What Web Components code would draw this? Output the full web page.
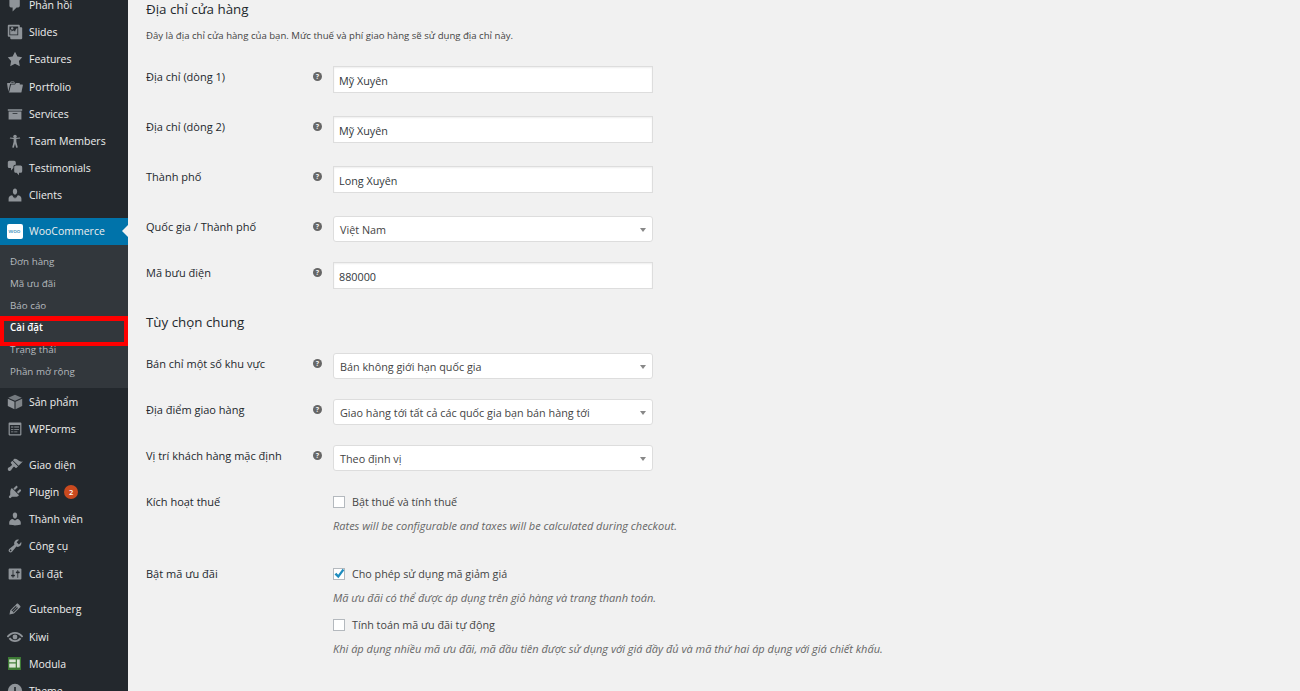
<!DOCTYPE html>
<html lang="vi">
<head>
<meta charset="utf-8">
<title>Cài đặt WooCommerce</title>
<style>
    html, body {
        margin: 0;
        height: 691px;
        overflow: hidden;
        background: #f1f1f1;
        font-family: "Open Sans", "Noto Sans", sans-serif;
    }
    body {
        display: flex;
    }
</style>
</head>
<body>
<admin-menu>
    <menu-item icon="comments">Phản hồi</menu-item>
    <menu-item icon="gallery">Slides</menu-item>
    <menu-item icon="star">Features</menu-item>
    <menu-item icon="folder">Portfolio</menu-item>
    <menu-item icon="archive">Services</menu-item>
    <menu-item icon="person">Team Members</menu-item>
    <menu-item icon="chat">Testimonials</menu-item>
    <menu-item icon="businessman">Clients</menu-item>
    <menu-item icon="woo" current gap>WooCommerce</menu-item>
    <sub-menu>
        <sub-item>Đơn hàng</sub-item>
        <sub-item>Mã ưu đãi</sub-item>
        <sub-item>Báo cáo</sub-item>
        <sub-item current>Cài đặt</sub-item>
        <sub-item>Trạng thái</sub-item>
        <sub-item>Phần mở rộng</sub-item>
    </sub-menu>
    <menu-item icon="box">Sản phẩm</menu-item>
    <menu-item icon="forms">WPForms</menu-item>
    <menu-item icon="brush" gap>Giao diện</menu-item>
    <menu-item icon="plugin" badge="2">Plugin</menu-item>
    <menu-item icon="users">Thành viên</menu-item>
    <menu-item icon="tools">Công cụ</menu-item>
    <menu-item icon="sliders">Cài đặt</menu-item>
    <menu-item icon="pencil" gap>Gutenberg</menu-item>
    <menu-item icon="eye">Kiwi</menu-item>
    <menu-item icon="modula">Modula</menu-item>
    <menu-item icon="clock">Theme</menu-item>
</admin-menu>

<settings-page>
    <section-title>Địa chỉ cửa hàng</section-title>
    <section-desc>Đây là địa chỉ cửa hàng của bạn. Mức thuế và phí giao hàng sẽ sử dụng địa chỉ này.</section-desc>

    <form-row label="Địa chỉ (dòng 1)" help><text-box>Mỹ Xuyên</text-box></form-row>
    <form-row label="Địa chỉ (dòng 2)" help><text-box>Mỹ Xuyên</text-box></form-row>
    <form-row label="Thành phố" help><text-box>Long Xuyên</text-box></form-row>
    <form-row label="Quốc gia / Thành phố" help compact><select-box>Việt Nam</select-box></form-row>
    <form-row label="Mã bưu điện" help><text-box>880000</text-box></form-row>

    <section-title style="margin-top:1px;margin-bottom:22px">Tùy chọn chung</section-title>

    <form-row label="Bán chỉ một số khu vực" help compact><select-box>Bán không giới hạn quốc gia</select-box></form-row>
    <form-row label="Địa điểm giao hàng" help compact><select-box>Giao hàng tới tất cả các quốc gia bạn bán hàng tới</select-box></form-row>
    <form-row label="Vị trí khách hàng mặc định" help compact><select-box>Theo định vị</select-box></form-row>

    <form-row label="Kích hoạt thuế" plain>
        <check-box>Bật thuế và tính thuế</check-box>
        <field-note>Rates will be configurable and taxes will be calculated during checkout.</field-note>
    </form-row>
    <form-row label="Bật mã ưu đãi" plain style="margin-top:27px">
        <check-box checked>Cho phép sử dụng mã giảm giá</check-box>
        <field-note>Mã ưu đãi có thể được áp dụng trên giỏ hàng và trang thanh toán.</field-note>
        <check-box style="margin-top:6px">Tính toán mã ưu đãi tự động</check-box>
        <field-note>Khi áp dụng nhiều mã ưu đãi, mã đầu tiên được sử dụng với giá đầy đủ và mã thứ hai áp dụng với giá chiết khấu.</field-note>
    </form-row>
    <section-title style="margin-top:29px">Tùy chọn tiền tệ</section-title>
</settings-page>

<script>
const ICONS = {
    comments: '<path d="M5 2h9c1.1 0 2 .9 2 2v7c0 1.1-.9 2-2 2h-2l-5 5v-5H5c-1.1 0-2-.9-2-2V4c0-1.1.9-2 2-2z"/>',
    gallery: '<path d="M16 4h1.96c.57 0 1.04.47 1.04 1.04v12.92c0 .57-.47 1.04-1.04 1.04H5.04C4.47 19 4 18.53 4 17.96V16H2.04C1.47 16 1 15.53 1 14.96V2.04C1 1.47 1.47 1 2.04 1h12.92c.57 0 1.04.47 1.04 1.04V4zM3 14h11V3H3v11zm5-8.5C8 4.67 7.33 4 6.5 4S5 4.67 5 5.5 5.67 7 6.5 7 8 6.33 8 5.5zm2 4.5s1-5 3-5v8H4V7c2 0 2 3 2 3s.33-2 2-2 2 2 2 2z"/>',
    star: '<path d="M10 1l3 6 6 .75-4.12 4.62L16 19l-6-3-6 3 1.13-6.63L1 7.75 7 7z"/>',
    folder: '<path d="M4 5H.78c-.37 0-.74.32-.69.84l1.56 9.99S3.5 8.47 3.86 6.7c.11-.53.61-.7.98-.7H10s-.7-2.08-.77-2.31C9.11 3.25 8.89 3 8.45 3H5.14c-.36 0-.7.23-.8.64C4.25 4.04 4 5 4 5zm4.88 0h-4s.42-1 .87-1h2.13c.48 0 1 1 1 1zM2.67 16.25c-.31.47-.76.75-1.26.75h15.73c.54 0 .92-.31 1.03-.83.44-2.19 1.68-8.44 1.68-8.44.07-.5-.3-.73-.62-.73H16V5.53c0-.16-.26-.53-.66-.53h-3.76c-.52 0-.87.58-.87.58L10 7H5.59c-.32 0-.63.19-.69.5 0 0-1.59 6.7-1.72 7.33-.07.37-.22.99-.51 1.42z"/>',
    archive: '<path d="M19 4v2H1V4h18zM2 7h16v10H2V7zm11 3V9H7v1h6z"/>',
    person: '<circle cx="10" cy="4.5" r="2.2"/><path d="M3.500 6.800l4.800.7v3.300L6.500 18l2 .5L10 13.500l1.500 5 2-.5-1.800-7.200V7.500l4.800-.7-.3-1.300-6.200.9-6.200-.9z"/>',
    chat: '<path d="M11 6h-.82C9.07 6 8 7.2 8 8.16V10l-3 3v-3H3c-1.1 0-2-.9-2-2V3c0-1.1.9-2 2-2h6c1.1 0 2 .9 2 2v3zm0 1h6c1.1 0 2 .9 2 2v5c0 1.1-.9 2-2 2h-2v3l-3-3h-1c-1.1 0-2-.9-2-2V9c0-1.1.9-2 2-2z"/>',
    businessman: '<path d="M7.300 5.500C7.300 3.600 8.500 2 10 2s2.700 1.600 2.700 3.500S11.500 9.500 10 9.500 7.300 7.400 7.300 5.500zM2 18v-3.500C2 12.500 4 10.600 6.500 10.400l2.700 4.100.8-2.500.8 2.500 2.700-4.100c2.500.2 4.500 2.100 4.500 4.100V18z"/>',
    box: '<path d="M10 1l8.500 3.600L10 8.400 1.500 4.600z" opacity=".75"/><path d="M1 6l8.300 3.700V19L1 15z"/><path d="M19 6l-8.300 3.700V19l8.300-4z" opacity=".85"/>',
    forms: '<path fill-rule="evenodd" d="M3 2h14a1 1 0 0 1 1 1v14a1 1 0 0 1-1 1H3a1 1 0 0 1-1-1V3a1 1 0 0 1 1-1zm.5 3v11.500h13V5zM5 7h3v1H5zm4 0h6v1H9zm-4 3h3v1H5zm4 0h6v1H9zm-4 3h3v1H5zm4 0h4v1H9z"/>',
    brush: '<path d="M14.48 11.06L7.41 3.99l1.5-1.5c.5-.56 2.3-.47 3.51.32 1.21.8 1.43 1.28 2.91 2.1 1.18.64 2.45 1.26 4.45.85zm-.71.71L6.7 4.7 4.93 6.47c-.39.39-.39 1.02 0 1.41l1.06 1.06c.39.39.39 1.03 0 1.42-.6.6-1.43 1.11-2.21 1.69-.35.26-.7.53-1.01.84C1.43 13.23 1 14.11 1 15.07c0 .33.03.56.09.79.2.72.76 1.3 1.48 1.51.23.07.46.1.79.1.96 0 1.84-.43 2.2-1.79.31-.31.58-.66.84-1.01.58-.78 1.09-1.61 1.69-2.21.39-.39 1.03-.39 1.42 0l1.06 1.06c.39.39 1.02.39 1.41 0z"/>',
    plugin: '<path d="M13.11 4.36L9.87 7.6 8 5.73l3.24-3.24c.35-.34 1.05-.2 1.56.32.52.51.66 1.21.31 1.55zm-8 1.77l.91-1.12 9.01 9.01-1.19.84c-.71.71-2.63 1.16-3.82 1.16H6.14L4.9 17.26c-.59.59-1.54.59-2.12 0-.59-.58-.59-1.53 0-2.12l1.24-1.24v-3.88c0-1.13.4-3.19 1.09-3.89zm7.26 3.97l3.24-3.24c.34-.35 1.04-.21 1.55.31.52.51.66 1.21.31 1.55l-3.24 3.25z"/>',
    users: '<path d="M10 9.25c-2.27 0-2.73-3.44-2.73-3.44C7 4.02 7.82 2 9.97 2c2.16 0 2.98 2.02 2.71 3.81 0 0-.41 3.44-2.68 3.44zm0 2.57L12.72 10c2.39 0 4.52 2.33 4.52 4.53v2.49s-3.65 1.13-7.24 1.13c-3.65 0-7.24-1.13-7.24-1.13v-2.49c0-2.25 1.94-4.53 4.43-4.53z"/>',
    tools: '<path d="M16.68 9.77c-1.34 1.34-3.3 1.67-4.95.99l-5.41 6.52c-.99.99-2.59.99-3.58 0s-.99-2.59 0-3.57l6.52-5.42c-.68-1.65-.35-3.61.99-4.95 1.28-1.28 3.12-1.62 4.72-1.06l-2.89 2.89 2.82 2.82 2.86-2.87c.53 1.58.18 3.39-1.08 4.65zM3.81 16.21c.4.39 1.04.39 1.43 0 .4-.4.4-1.04 0-1.43-.39-.4-1.03-.4-1.43 0-.39.39-.39 1.03 0 1.43z"/>',
    sliders: '<path d="M18 16V4c0-.55-.45-1-1-1H3c-.55 0-1 .45-1 1v12c0 .55.45 1 1 1h14c.55 0 1-.45 1-1zM8 11h1c.55 0 1 .45 1 1s-.45 1-1 1H8v1.5c0 .28-.22.5-.5.5s-.5-.22-.5-.5V13H6c-.55 0-1-.45-1-1s.45-1 1-1h1V5.5c0-.28.22-.5.5-.5s.5.22.5.5V11zm5-2h-1c-.55 0-1-.45-1-1s.45-1 1-1h1V5.5c0-.28.22-.5.5-.5s.5.22.5.5V7h1c.55 0 1 .45 1 1s-.45 1-1 1h-1v5.5c0 .28-.22.5-.5.5s-.5-.22-.5-.5V9z"/>',
    pencil: '<path d="M13.89 3.39l2.71 2.72c.46.46.42 1.24.03 1.64l-8.01 8.02-5.56 1.16 1.16-5.58s7.6-7.63 7.99-8.03c.39-.39 1.22-.39 1.68.07zm-2.73 2.79l-5.59 5.61 1.11 1.11 5.54-5.65zm-2.97 8.23l5.58-5.6-1.07-1.08-5.59 5.6z"/>',
    eye: '<path fill="none" stroke="currentColor" stroke-width="2.4" d="M.5 10C3.500 6.200 6.500 4.800 10 4.800s6.500 1.400 9.500 5.200M3 11.500c2 2.600 4.300 3.700 7 3.700s5-1.100 7-3.700"/><circle cx="10" cy="10" r="3"/>',
    clock: '<path fill-rule="evenodd" d="M10 1a9 9 0 1 1 0 18 9 9 0 0 1 0-18zm-1 4v6l4.500 2.500.8-1.400L11 10V5z"/>'
};

class AdminMenu extends HTMLElement {
    connectedCallback() {
        this.attachShadow({ mode: "open" });
        this.shadowRoot.innerHTML = `
            <style>
                :host {
                    display: block;
                    flex: none;
                    width: 128px;
                    height: 691px;
                    overflow: hidden;
                    background: #23282d;
                }
                .list {
                    margin-top: -8.5px;
                }
            </style>
            <div class="list"><slot></slot></div>
        `;
    }
}

class MenuItem extends HTMLElement {
    connectedCallback() {
        this.attachShadow({ mode: "open" });
        const name = this.getAttribute("icon");
        const current = this.hasAttribute("current");
        let icon = `<svg viewBox="0 0 20 20" width="16" height="16" fill="currentColor">${ICONS[name] || ""}</svg>`;
        if (name === "woo") {
            icon = `<span class="woo">woo</span>`;
        } else if (name === "modula") {
            icon = `<svg viewBox="0 0 16 16" width="13" height="13"><rect width="16" height="16" fill="#3d7a35"/><rect x="1.5" y="3" width="8" height="3.5" fill="#d8e4d5"/><rect x="1.5" y="8" width="8" height="5" fill="#d8e4d5"/><rect x="11" y="3" width="3.5" height="10" fill="#d8e4d5"/></svg>`;
        }
        const badge = this.getAttribute("badge");
        this.shadowRoot.innerHTML = `
            <style>
                :host {
                    display: block;
                    margin-top: ${this.hasAttribute("gap") ? "8.8px" : "0"};
                }
                .row {
                    display: flex;
                    align-items: center;
                    height: 27.2px;
                    color: #eee;
                    font-size: 10.5px;
                    background: ${current ? "#0073aa" : "none"};
                    position: relative;
                }
                .icon {
                    flex: none;
                    width: 29px;
                    display: flex;
                    justify-content: center;
                    color: #8f9499;
                }
                .woo {
                    width: 16px;
                    height: 15px;
                    border-radius: 2px;
                    background: #fff;
                    color: #0073aa;
                    font-size: 6px;
                    line-height: 15px;
                    text-align: center;
                }
                .badge {
                    margin-left: 5px;
                    width: 14px;
                    height: 14px;
                    border-radius: 50%;
                    background: #ca4a1f;
                    color: #fff;
                    font-size: 7.5px;
                    font-weight: 600;
                    line-height: 14px;
                    text-align: center;
                }
                .arrow {
                    position: absolute;
                    right: 0;
                    top: 7.6px;
                    border: 6px solid transparent;
                    border-right-color: #f1f1f1;
                    border-left: 0;
                }
            </style>
            <div class="row">
                <span class="icon">${icon}</span>
                <span><slot></slot></span>
                ${badge ? `<span class="badge">${badge}</span>` : ""}
                ${current ? `<span class="arrow"></span>` : ""}
            </div>
        `;
    }
}

class SubMenu extends HTMLElement {
    connectedCallback() {
        this.attachShadow({ mode: "open" });
        this.shadowRoot.innerHTML = `
            <style>
                :host {
                    display: block;
                    background: #32373c;
                    padding: 6px 0 5px;
                }
            </style>
            <slot></slot>
        `;
    }
}

class SubItem extends HTMLElement {
    connectedCallback() {
        this.attachShadow({ mode: "open" });
        const current = this.hasAttribute("current");
        this.shadowRoot.innerHTML = `
            <style>
                :host {
                    display: block;
                    height: 22px;
                    line-height: 22px;
                    padding-left: 10px;
                    font-size: 9.8px;
                    color: ${current ? "#fff" : "#b4b9be"};
                    font-weight: ${current ? "600" : "400"};
                    position: relative;
                }
                .mark {
                    position: absolute;
                    left: 0;
                    top: -1px;
                    width: 128px;
                    height: 30px;
                    box-sizing: border-box;
                    border: 4px solid #f00;
                    border-top-width: 5px;
                }
            </style>
            <slot></slot>
            ${current ? `<span class="mark"></span>` : ""}
        `;
    }
}

class SettingsPage extends HTMLElement {
    connectedCallback() {
        this.attachShadow({ mode: "open" });
        this.shadowRoot.innerHTML = `
            <style>
                :host {
                    display: block;
                    flex: 1;
                    padding: 0 0 0 18px;
                    height: 691px;
                    overflow: hidden;
                    color: #23282d;
                }
            </style>
            <slot></slot>
        `;
    }
}

class SectionTitle extends HTMLElement {
    connectedCallback() {
        this.attachShadow({ mode: "open" });
        this.shadowRoot.innerHTML = `
            <style>
                :host {
                    display: block;
                    font-size: 13.35px;
                    line-height: 18px;
                    color: #23282d;
                }
            </style>
            <slot></slot>
        `;
    }
}

class SectionDesc extends HTMLElement {
    connectedCallback() {
        this.attachShadow({ mode: "open" });
        this.shadowRoot.innerHTML = `
            <style>
                :host {
                    display: block;
                    padding: 11px 0 23px;
                    font-size: 9.6px;
                    line-height: 14px;
                    color: #444;
                }
            </style>
            <slot></slot>
        `;
    }
}

class FormRow extends HTMLElement {
    connectedCallback() {
        this.attachShadow({ mode: "open" });
        const label = this.getAttribute("label");
        const help = this.hasAttribute("help");
        const plain = this.hasAttribute("plain");
        this.shadowRoot.innerHTML = `
            <style>
                :host {
                    display: grid;
                    grid-template-columns: 167px 20px 320px;
                    height: ${plain ? "auto" : this.hasAttribute("compact") ? "46px" : "50px"};
                    font-size: 11px;
                    color: #23282d;
                }
                .label {
                    line-height: 22px;
                }
                .help {
                    padding-top: 6px;
                }
                .help span {
                    display: block;
                    width: 9px;
                    height: 9px;
                    border-radius: 50%;
                    background: #666;
                    color: #f1f1f1;
                    font-size: 7px;
                    font-weight: 700;
                    line-height: 9px;
                    text-align: center;
                }
            </style>
            <div class="label">${label}</div>
            <div class="help">${help ? "<span>?</span>" : ""}</div>
            <div><slot></slot></div>
        `;
    }
}

class TextBox extends HTMLElement {
    connectedCallback() {
        this.attachShadow({ mode: "open" });
        this.shadowRoot.innerHTML = `
            <style>
                :host {
                    display: block;
                    box-sizing: border-box;
                    width: 320px;
                    height: 27px;
                    padding-left: 5px;
                    background: #fff;
                    border: 1px solid #ddd;
                    box-shadow: inset 0 1px 2px rgba(0,0,0,.07);
                    font-size: 10.8px;
                    line-height: 27px;
                    color: #32373c;
                }
            </style>
            <slot></slot>
        `;
    }
}

class SelectBox extends HTMLElement {
    connectedCallback() {
        this.attachShadow({ mode: "open" });
        this.shadowRoot.innerHTML = `
            <style>
                :host {
                    display: flex;
                    align-items: center;
                    justify-content: space-between;
                    box-sizing: border-box;
                    width: 320px;
                    height: 26px;
                    padding: 1px 6px 0 6px;
                    background: #fff;
                    border: 1px solid #ddd;
                    border-radius: 3px;
                    font-size: 10.8px;
                    color: #444;
                }
                i {
                    border: 3.5px solid transparent;
                    border-top: 4px solid #888;
                    border-bottom: 0;
                }
            </style>
            <span><slot></slot></span>
            <i></i>
        `;
    }
}

class CheckBox extends HTMLElement {
    connectedCallback() {
        this.attachShadow({ mode: "open" });
        const tick = this.hasAttribute("checked")
            ? `<svg viewBox="0 0 12 12" width="12" height="12"><path d="M1.5 6.5l1.8-1.800 1.900 2.100L9.600.8l1.700 1.400-5.900 8z" fill="#1e8cbe"/></svg>`
            : "";
        this.shadowRoot.innerHTML = `
            <style>
                :host {
                    display: flex;
                    align-items: center;
                    gap: 7px;
                    height: 22px;
                    font-size: 10.75px;
                    color: #444;
                }
                .box {
                    flex: none;
                    display: flex;
                    align-items: center;
                    justify-content: center;
                    box-sizing: border-box;
                    width: 12px;
                    height: 12px;
                    background: #fff;
                    border: 1px solid #b4b9be;
                }
                svg {
                    flex: none;
                }
            </style>
            <span class="box">${tick}</span>
            <span><slot></slot></span>
        `;
    }
}

class FieldNote extends HTMLElement {
    connectedCallback() {
        this.attachShadow({ mode: "open" });
        this.shadowRoot.innerHTML = `
            <style>
                :host {
                    display: block;
                    margin-top: 3px;
                    font-size: 11px;
                    line-height: 20px;
                    font-style: italic;
                    color: #666;
                    white-space: nowrap;
                }
            </style>
            <slot></slot>
        `;
    }
}

customElements.define("admin-menu", AdminMenu);
customElements.define("menu-item", MenuItem);
customElements.define("sub-menu", SubMenu);
customElements.define("sub-item", SubItem);
customElements.define("settings-page", SettingsPage);
customElements.define("section-title", SectionTitle);
customElements.define("section-desc", SectionDesc);
customElements.define("form-row", FormRow);
customElements.define("text-box", TextBox);
customElements.define("select-box", SelectBox);
customElements.define("check-box", CheckBox);
customElements.define("field-note", FieldNote);
</script>
</body>
</html>
